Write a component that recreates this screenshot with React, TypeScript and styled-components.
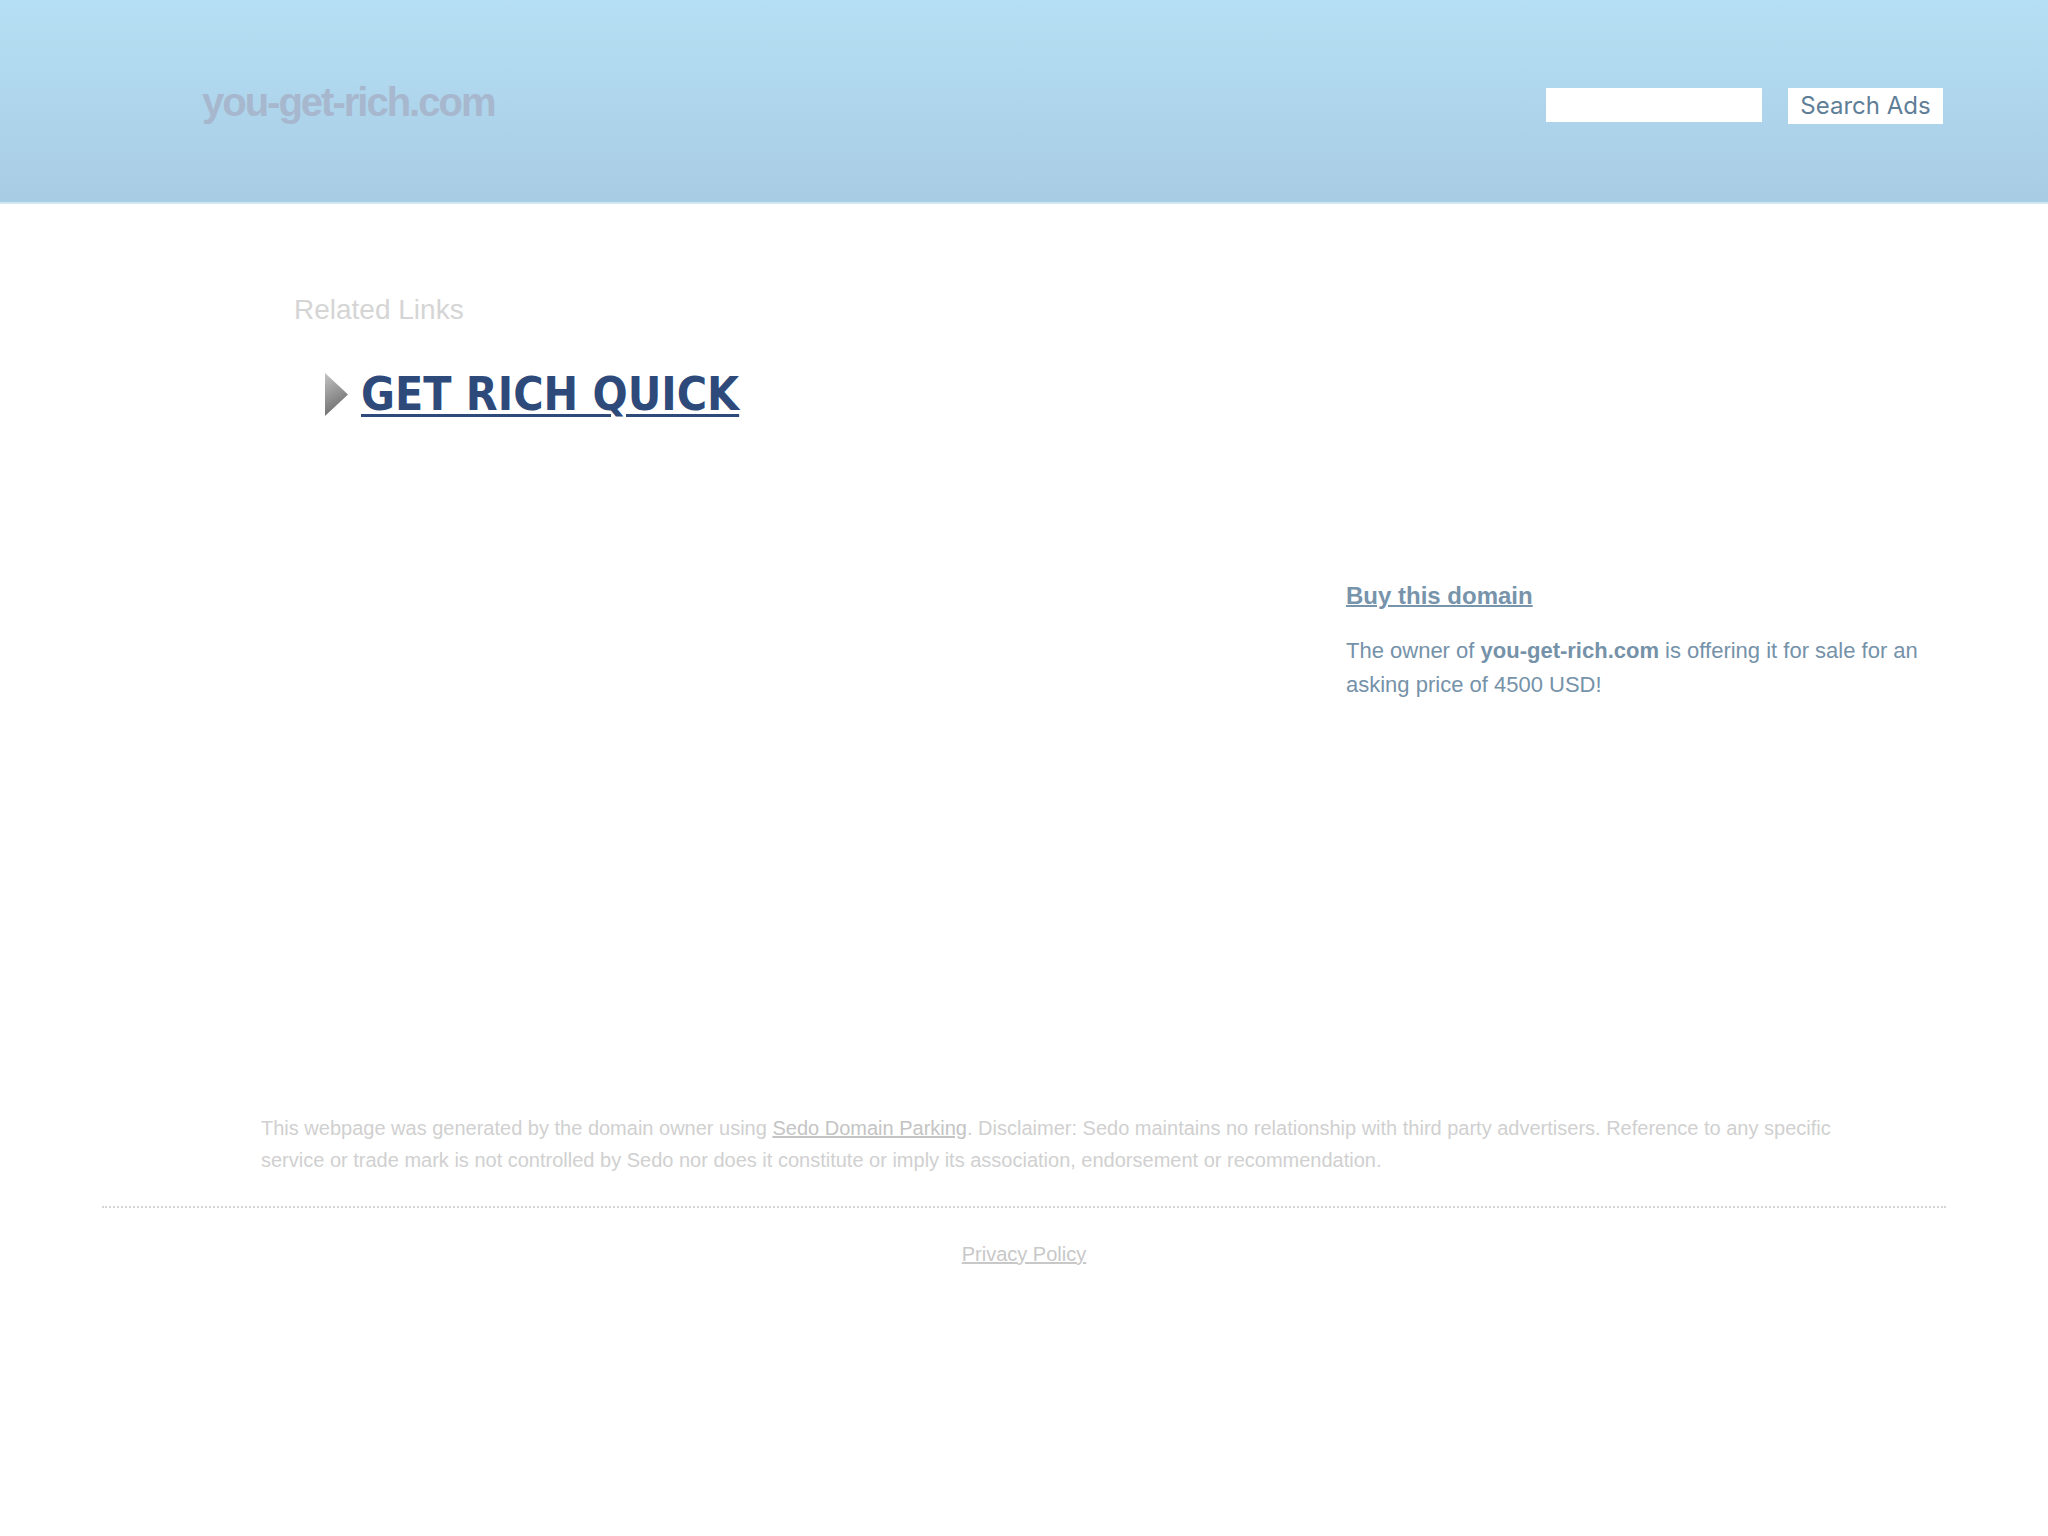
import React from "react";
import styled, { createGlobalStyle } from "styled-components";

const GlobalStyle = createGlobalStyle`
  html, body {
    margin: 0;
    padding: 0;
    background: #ffffff;
  }
  body {
    font-family: "Liberation Sans", Arial, sans-serif;
  }
`;

const Header = styled.header`
  height: 202px;
  border-bottom: 2px solid #d2e8f4;
  background: linear-gradient(to bottom, #b5dff4 0%, #a8cce4 100%);
  display: flex;
  justify-content: space-between;
  align-items: flex-start;
  padding: 0 105px 0 202px;
`;

const Logo = styled.div`
  margin-top: 78px;
  font-family: "Liberation Sans", Arial, sans-serif;
  font-weight: bold;
  font-size: 40px;
  line-height: 48px;
  letter-spacing: -2px;
  color: #a7b7cd;
`;

const SearchForm = styled.form`
  margin-top: 88px;
  display: flex;
  align-items: flex-start;
  gap: 26px;
`;

const SearchInput = styled.input`
  width: 216px;
  height: 34px;
  border: none;
  padding: 0 6px;
  box-sizing: border-box;
  background: #ffffff;
  outline: none;
`;

const SearchButton = styled.button`
  width: 155px;
  height: 36px;
  border: none;
  padding: 0;
  background: #ffffff;
  color: #5f7e98;
  font-family: Inter, "Noto Sans", sans-serif;
  font-size: 24px;
  line-height: 36px;
  cursor: pointer;
`;

const Main = styled.main`
  width: 1844px;
  margin: 0 auto;
  display: flex;
  min-height: 908px;
`;

const LeftColumn = styled.section`
  flex: 1;
  padding: 90px 0 0 192px;
`;

const RelatedTitle = styled.h2`
  margin: 0;
  font-family: "Liberation Sans", Arial, sans-serif;
  font-weight: normal;
  font-size: 28px;
  line-height: 32px;
  color: #d5d5d5;
`;

const LinkRow = styled.div`
  margin: 40px 0 0 31px;
  display: flex;
  align-items: center;
  gap: 13px;
`;

const BigLink = styled.a`
  font-family: "DejaVu Sans Condensed", "DejaVu Sans", sans-serif;
  font-stretch: condensed;
  font-weight: bold;
  font-size: 46px;
  line-height: 56px;
  color: #2e4a7b;
  text-decoration: underline;
  text-decoration-thickness: 3px;
  text-underline-offset: 4px;
`;

const RightColumn = styled.aside`
  width: 600px;
  padding-top: 378px;
`;

const BuyLink = styled.a`
  display: block;
  font-family: "Liberation Sans", Arial, sans-serif;
  font-weight: bold;
  font-size: 24px;
  line-height: 28px;
  color: #7794ab;
  text-decoration: underline;
  text-decoration-thickness: 2px;
`;

const SaleText = styled.p`
  margin: 24px 0 0;
  font-family: "Liberation Sans", Arial, sans-serif;
  font-size: 22px;
  line-height: 34px;
  color: #7592a9;

  b {
    font-weight: bold;
  }
`;

const Footer = styled.footer`
  width: 1844px;
  margin: 0 auto;
  display: flex;
  flex-direction: column;
`;

const Disclaimer = styled.p`
  margin: 0;
  padding-left: 159px;
  max-width: 1600px;
  font-family: "Liberation Sans", Arial, sans-serif;
  font-size: 20px;
  line-height: 32px;
  color: #d0d0d0;

  a {
    color: #c4c4c4;
    text-decoration: underline;
  }
`;

const Divider = styled.hr`
  margin: 30px 0 0;
  border: none;
  border-top: 2px dotted #d6d6d6;
  height: 0;
`;

const PrivacyLink = styled.a`
  align-self: center;
  margin-top: 34px;
  font-family: "Liberation Sans", Arial, sans-serif;
  font-size: 20px;
  line-height: 24px;
  color: #c8c8c8;
  text-decoration: underline;
`;

const Arrow = () => (
  <svg width="23" height="43" viewBox="0 0 23 43">
    <defs>
      <linearGradient id="arrowGrad" x1="0" y1="0" x2="0.3" y2="1">
        <stop offset="0%" stopColor="#c4c4c4" />
        <stop offset="100%" stopColor="#6e6e6e" />
      </linearGradient>
    </defs>
    <polygon points="0,0 23,21.5 0,43" fill="url(#arrowGrad)" />
  </svg>
);

export default function App() {
  return (
    <>
      <GlobalStyle />
      <Header>
        <Logo>you-get-rich.com</Logo>
        <SearchForm onSubmit={(e) => e.preventDefault()}>
          <SearchInput type="text" aria-label="Search" />
          <SearchButton type="submit">Search Ads</SearchButton>
        </SearchForm>
      </Header>
      <Main>
        <LeftColumn>
          <RelatedTitle>Related Links</RelatedTitle>
          <LinkRow>
            <Arrow />
            <BigLink href="#">GET RICH QUICK</BigLink>
          </LinkRow>
        </LeftColumn>
        <RightColumn>
          <BuyLink href="#">Buy this domain</BuyLink>
          <SaleText>
            The owner of <b>you-get-rich.com</b> is offering it for sale for an
            asking price of 4500 USD!
          </SaleText>
        </RightColumn>
      </Main>
      <Footer>
        <Disclaimer>
          This webpage was generated by the domain owner using{" "}
          <a href="#">Sedo Domain Parking</a>. Disclaimer: Sedo maintains no
          relationship with third party advertisers. Reference to any specific
          service or trade mark is not controlled by Sedo nor does it constitute
          or imply its association, endorsement or recommendation.
        </Disclaimer>
        <Divider />
        <PrivacyLink href="#">Privacy Policy</PrivacyLink>
      </Footer>
    </>
  );
}
